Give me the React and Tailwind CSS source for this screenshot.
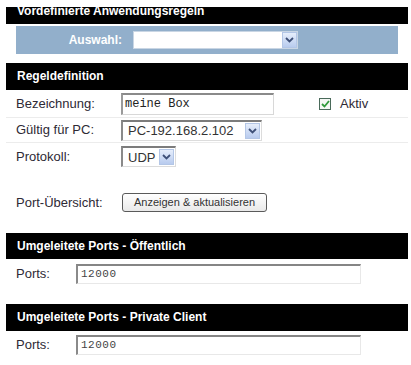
import React from 'react';

const Chevron = () => (
  <svg width="9" height="6" viewBox="0 0 9 6">
    <path d="M1 1 L4.5 4.5 L8 1" fill="none" stroke="#3e5078" strokeWidth="1.8" />
  </svg>
);

const DropArrow = ({ className = '' }) => (
  <div className={`w-[15px] h-[16px] flex items-center justify-center border border-[#b3c6e6] bg-gradient-to-b from-[#e6eefb] to-[#b8cbee] ${className}`}>
    <Chevron />
  </div>
);

const Bar = ({ children, className = '' }) => (
  <div className={`ml-[6px] w-[402px] bg-black text-white font-bold text-[12px] pl-[11px] ${className}`}>
    {children}
  </div>
);

const Label = ({ children, width = 'w-[105px]' }) => (
  <div className={`${width} shrink-0 text-[13px] text-[#2e2a35]`}>{children}</div>
);

const Select = ({ value, className = '' }) => (
  <div className={`h-[21px] flex items-center justify-between border-t-2 border-l-2 border-r border-b border-t-[#7c7c7c] border-l-[#8a8a8a] border-r-[#dcdcdc] border-b-[#dcdcdc] bg-white pl-[5px] pr-[1px] ${className}`}>
    <span className="text-[13px] leading-none text-[#333]">{value}</span>
    <DropArrow />
  </div>
);

const PortsRow = ({ className = '' }) => (
  <div className={`ml-[6px] flex items-center pl-[10px] ${className}`}>
    <Label width="w-[60px]">Ports:</Label>
    <div className="w-[285px] h-[20px] flex items-center border-t-2 border-l-2 border-r border-b border-t-[#858585] border-l-[#8a8a8a] border-r-[#e8e8e8] border-b-[#e8e8e8] pl-[3px]">
      <span className="text-[11px] text-[#444] tracking-[0.5px]" style={{ fontFamily: '"Liberation Mono", monospace' }}>12000</span>
    </div>
  </div>
);

export default function App() {
  return (
    <div className="w-[411px] h-[365px] overflow-hidden bg-white" style={{ fontFamily: '"Liberation Sans", Arial, sans-serif' }}>
      {/* Vordefinierte Anwendungsregeln */}
      <Bar className="mt-[7px] h-[17px] leading-[9px]">Vordefinierte Anwendungsregeln</Bar>

      <div className="mt-[2px] ml-[16px] w-[382px] h-[28px] bg-[#92afcb] flex items-center">
        <div className="w-[106px] text-right text-white font-bold text-[12px]">Auswahl:</div>
        <div className="ml-[11px] w-[165px] h-[18px] bg-white border border-[#c9d6e4] flex items-center justify-end">
          <DropArrow className="h-[16px]" />
        </div>
      </div>

      {/* Regeldefinition */}
      <Bar className="mt-[9px] h-[27px] leading-[27px]">Regeldefinition</Bar>

      <div className="ml-[6px] w-[402px] h-[28px] flex items-center pl-[10px] border-b border-[#ececec]">
        <Label>Bezeichnung:</Label>
        <div className="w-[153px] h-[22px] flex items-center border-t-2 border-l-2 border-r border-b border-t-[#8a8a8a] border-l-[#9a9a9a] border-r-[#d8d8d8] border-b-[#d8d8d8] pl-[2px]">
          <span className="text-[12px] text-[#222]" style={{ fontFamily: '"Liberation Mono", monospace' }}>meine Box</span>
        </div>
        <div className="ml-[45px] w-[12px] h-[12px] border border-[#4a6a5a] bg-[#f4f8f4] flex items-center justify-center">
          <svg width="9" height="8" viewBox="0 0 9 8">
            <path d="M1 4 L3.5 6.5 L8 1" fill="none" stroke="#2f9a3a" strokeWidth="1.8" />
          </svg>
        </div>
        <span className="ml-[9px] text-[13px] text-[#2e2a35]">Aktiv</span>
      </div>

      <div className="ml-[6px] w-[402px] h-[25px] flex items-center pl-[10px] border-b border-[#ececec]">
        <Label>Gültig für PC:</Label>
        <Select value="PC-192.168.2.102" className="w-[141px]" />
      </div>

      <div className="ml-[6px] h-[27px] flex items-center pl-[10px]">
        <Label>Protokoll:</Label>
        <Select value="UDP" className="w-[55px]" />
      </div>

      <div className="ml-[6px] mt-[19px] h-[27px] flex items-center pl-[10px]">
        <Label>Port-Übersicht:</Label>
        <button className="ml-[1px] w-[145px] h-[19px] rounded-[3px] border border-[#5a5a5a] bg-gradient-to-b from-white to-[#e9e9e9] text-[11px] text-[#333] leading-none">
          Anzeigen &amp; aktualisieren
        </button>
      </div>

      {/* Umgeleitete Ports - Öffentlich */}
      <Bar className="mt-[17px] h-[26px] leading-[26px]">Umgeleitete Ports - Öffentlich</Bar>
      <PortsRow className="h-[30px]" />

      {/* Umgeleitete Ports - Private Client */}
      <Bar className="mt-[15px] h-[27px] leading-[27px]">Umgeleitete Ports - Private Client</Bar>
      <PortsRow className="h-[28px]" />
    </div>
  );
}
